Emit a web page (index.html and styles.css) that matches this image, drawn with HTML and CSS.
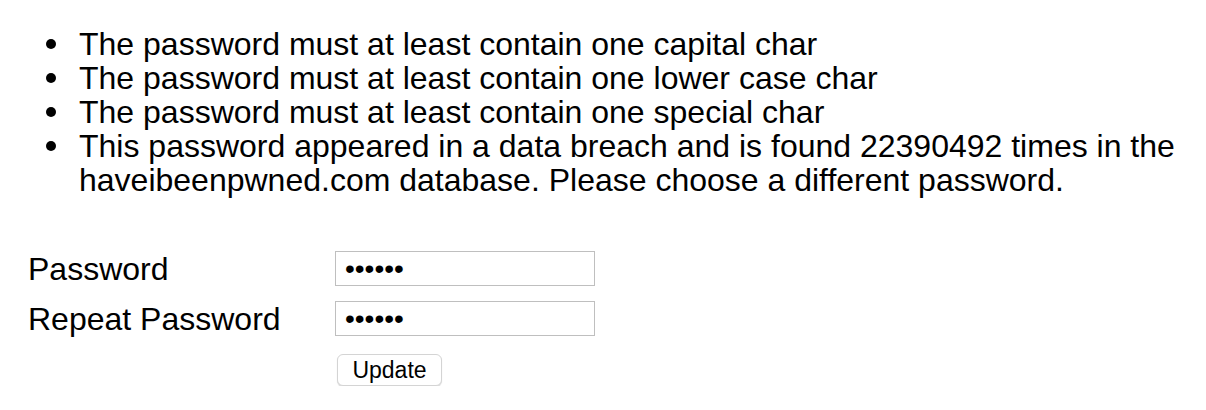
FILE: index.html
```html
<!DOCTYPE html>
<html>
<head>
<meta charset="utf-8">
<link rel="stylesheet" href="styles.css">
</head>
<body>
<ul class="errors">
  <li>The password must at least contain one capital char</li>
  <li>The password must at least contain one lower case char</li>
  <li>The password must at least contain one special char</li>
  <li>This password appeared in a data breach and is found 22390492 times in the haveibeenpwned.com database. Please choose a different password.</li>
</ul>
<form class="form">
  <label class="label" for="pw">Password</label>
  <input class="field" id="pw" type="password" value="secret">
  <label class="label" for="pw2">Repeat Password</label>
  <input class="field" id="pw2" type="password" value="secret">
  <span></span>
  <div><button class="btn" type="button">Update</button></div>
</form>
</body>
</html>
```
FILE: styles.css
```css
body {
  margin: 0;
  background: #fff;
  color: #000;
  font-family: "Liberation Sans", Arial, sans-serif;
}
.errors {
  margin: 27px 0 0 0;
  padding: 0 0 0 79px;
  font-size: 32px;
  line-height: 34px;
  list-style: none;
}
.errors li {
  padding-right: 20px;
}
.errors li::before {
  content: "";
  display: inline-block;
  width: 10px;
  height: 10px;
  border-radius: 50%;
  background: #000;
  margin-left: -33px;
  margin-right: 23px;
  vertical-align: 6px;
}
.form {
  margin: 54px 0 0 28px;
  display: grid;
  grid-template-columns: 307px 260px;
  row-gap: 15px;
  align-items: center;
}
.label {
  font-size: 32px;
  line-height: 34px;
}
.field {
  box-sizing: border-box;
  width: 260px;
  height: 35px;
  margin: 0;
  border: 1px solid #bfbfbf;
  padding: 0 9px;
  font-family: "Liberation Sans", Arial, sans-serif;
  font-size: 28px;
  color: #000;
  outline: none;
}
.btn {
  margin: 3px 0 0 2px;
  box-sizing: border-box;
  width: 105px;
  height: 32px;
  background: #fff;
  border: 1px solid #d4d4d4;
  border-radius: 6px;
  box-shadow: 0 1px 1px rgba(0,0,0,0.15);
  font-family: "Liberation Sans", Arial, sans-serif;
  font-size: 23px;
  color: #000;
  padding: 0;
}
```
